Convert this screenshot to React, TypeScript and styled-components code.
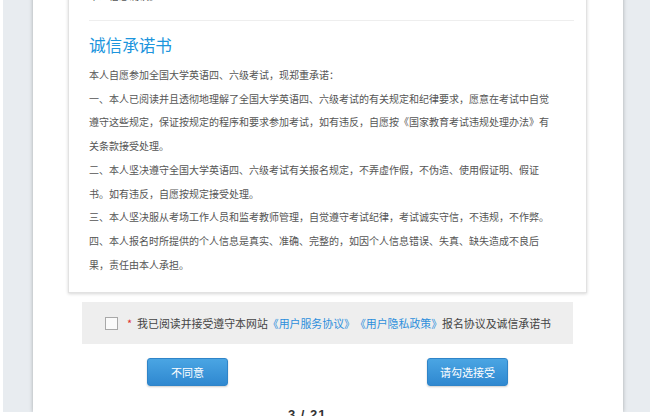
import styled, { createGlobalStyle } from 'styled-components';

const GlobalStyle = createGlobalStyle`
  html, body {
    margin: 0;
    padding: 0;
    background: #ffffff;
    font-family: 'Noto Sans CJK SC', 'Noto Sans', sans-serif;
    text-spacing-trim: space-all;
  }
`;

const Screen = styled.div`
  position: relative;
  width: 655px;
  height: 416px;
  overflow: hidden;
  background: #ffffff;
`;
const Frame = styled.div`
  margin: 0 5px 0 3px;
  height: 412px;
  background: #e8ecf0;
  display: flex;
  justify-content: center;
  overflow: hidden;
`;
const Panel = styled.div`
  width: 590px;
  margin-left: 3px;
  background: #ffffff;
  box-shadow: 0 0 4px rgba(0, 0, 0, 0.28);
  display: flex;
  flex-direction: column;
  margin-top: -16px;
`;
const Card = styled.section`
  margin: 0 36px 0 35px;
  border: 1px solid #e2e2e2;
  border-top: none;
  box-shadow: 0 1px 3px rgba(0, 0, 0, 0.16);
  padding: 0 12px 16px 20px;
`;
const PrevLine = styled.div`
  font-size: 10px;
  line-height: 24px;
  color: #555;
  padding-bottom: 12px;
  border-bottom: 1px solid #eeeeee;
`;
const Title = styled.h2`
  margin: 12px 0 6px;
  font-size: 16.6px;
  line-height: 24px;
  font-weight: 400;
  color: #1c95dd;
`;
const Body = styled.div`
  font-size: 10px;
  line-height: 23.7px;
  color: #555;
`;
const Para = styled.p`
  margin: 0;
  white-space: nowrap;
`;
const AgreeBar = styled.div`
  margin: 9px 50px 0 49px;
  height: 42px;
  background: #eeeeee;
  display: flex;
  align-items: center;
  padding-left: 23px;
  font-size: 10.9px;
  color: #444;
`;
const Check = styled.span`
  width: 11px;
  height: 11px;
  border: 1px solid #a8a8a8;
  background: #fafafa;
  margin-right: 9px;
`;
const Star = styled.span`
  color: #e03030;
  margin-right: 5px;
`;
const Link = styled.span`
  color: #2d8fdc;
`;
const Buttons = styled.div`
  display: flex;
  justify-content: space-between;
  padding: 0 115px 0 114px;
  margin-top: 14px;
`;
const Button = styled.button`
  width: 81px;
  height: 28px;
  border: 1px solid #2f84c8;
  border-radius: 3px;
  background: linear-gradient(#4aa5e3, #2f88d0);
  box-shadow: 0 1px 2px rgba(0, 0, 0, 0.2);
  color: #ffffff;
  font-family: 'Noto Sans CJK SC', sans-serif;
  font-size: 11px;
  padding: 0;
`;
const PageNo = styled.div`
  position: absolute;
  left: 288px;
  top: 407px;
  font-family: 'Liberation Sans', sans-serif;
  font-weight: 700;
  font-size: 13px;
  color: #333;
  letter-spacing: 1px;
`;

function App() {
  return (
    <Screen>
      <GlobalStyle />
      <Frame>
        <Panel>
          <Card>
            <PrevLine>本人信息确认。</PrevLine>
            <Title>诚信承诺书</Title>
            <Body>
              <Para>本人自愿参加全国大学英语四、六级考试，现郑重承诺：</Para>
              <Para>
                一、本人已阅读并且透彻地理解了全国大学英语四、六级考试的有关规定和纪律要求，愿意在考试中自觉
                <br />
                遵守这些规定，保证按规定的程序和要求参加考试，如有违反，自愿按《国家教育考试违规处理办法》有
                <br />
                关条款接受处理。
              </Para>
              <Para>
                二、本人坚决遵守全国大学英语四、六级考试有关报名规定，不弄虚作假，不伪造、使用假证明、假证
                <br />
                书。如有违反，自愿按规定接受处理。
              </Para>
              <Para>三、本人坚决服从考场工作人员和监考教师管理，自觉遵守考试纪律，考试诚实守信，不违规，不作弊。</Para>
              <Para>
                四、本人报名时所提供的个人信息是真实、准确、完整的，如因个人信息错误、失真、缺失造成不良后
                <br />
                果，责任由本人承担。
              </Para>
            </Body>
          </Card>
          <AgreeBar>
            <Check />
            <Star>*</Star>
            我已阅读并接受遵守本网站
            <Link>《用户服务协议》《用户隐私政策》</Link>
            报名协议及诚信承诺书
          </AgreeBar>
          <Buttons>
            <Button>不同意</Button>
            <Button>请勾选接受</Button>
          </Buttons>
        </Panel>
      </Frame>
      <PageNo>3 / 21</PageNo>
    </Screen>
  );
}

export default App;
